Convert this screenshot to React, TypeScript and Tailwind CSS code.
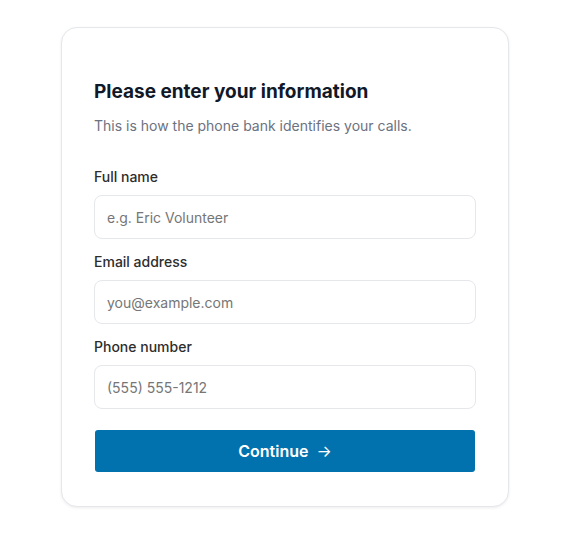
export default function App() {
  const fields = [
    { label: "Full name", placeholder: "e.g. Eric Volunteer", type: "text" },
    { label: "Email address", placeholder: "you@example.com", type: "email" },
    { label: "Phone number", placeholder: "(555) 555-1212", type: "tel" },
  ];

  return (
    <div className="min-h-screen bg-white pt-[27px] font-['Inter',sans-serif]">
      <div className="mx-auto w-[448px] rounded-2xl border border-[#e5e7eb] bg-white px-8 pb-[34px] pt-[50px] shadow-[0_1px_3px_rgba(0,0,0,0.08)]">
        <h1 className="text-[19px] leading-7 font-bold text-[#111827]">
          Please enter your information
        </h1>
        <p className="mt-[10px] text-sm leading-5 text-[#6b7280]">
          This is how the phone bank identifies your calls.
        </p>

        <form className="mt-[31px] flex flex-col gap-[13px]">
          {fields.map((field) => (
            <label key={field.label} className="flex flex-col">
              <span className="text-sm leading-5 font-medium text-[#2d2d2d]">
                {field.label}
              </span>
              <input
                type={field.type}
                placeholder={field.placeholder}
                className="mt-2 h-11 w-full rounded-lg border border-[#e5e7eb] bg-white px-3 text-sm text-[#1f2937] outline-none placeholder:text-[#767676]"
              />
            </label>
          ))}

          <button
            type="button"
            className="mx-px mt-2 flex h-[42px] items-center justify-center gap-2 rounded-[3px] bg-[#0172ad] text-base font-semibold text-white"
          >
            <span>Continue</span>
            <span className="font-normal">→</span>
          </button>
        </form>
      </div>
    </div>
  );
}
